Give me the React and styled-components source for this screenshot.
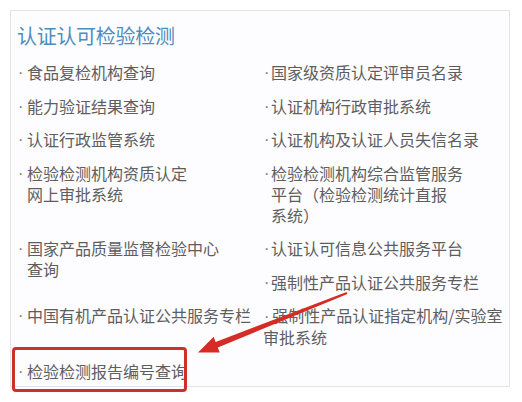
import React from 'react'
import styled, { createGlobalStyle } from 'styled-components';

const Global = createGlobalStyle`
  html, body { margin: 0; padding: 0; background: #fff; }
  body { font-family: "Noto Sans CJK SC", "Noto Sans", sans-serif; }
`;

let Page = styled.div`
  position: relative;
  width: 522px;
  height: 402px;
  overflow: hidden;
  padding: 10px 12px 15px 10px;
  box-sizing: border-box;
`;

let Panel = styled.div`
  box-sizing: border-box;
  height: 377px;
  border: 1px solid #e4e4e8;
  background: #fdfcfe;
  padding: 13px 6px 0 6px;
`;

let Title = styled.h2`
  margin: 0 0 14px;
  font-weight: normal;
  font-size: 20px;
  line-height: 24px;
  color: #4d8cbf;
  letter-spacing: -0.3px;
`;

let Grid = styled.div`
  display: grid;
  grid-template-columns: 246px 1fr;
  row-gap: 12.5px;
`;

let Cell = styled.div`
  display: flex;
  flex-direction: column;
  gap: 12.5px;
`;

let Item = styled.div`
  display: flex;
  font-size: 16px;
  line-height: 21px;
  color: #5e5e5e;
  white-space: nowrap;
`;

let Dot = styled.span`
  width: ${p => p.$w || 10}px;
  flex: none;
  font-family: "Liberation Sans", sans-serif;
  color: #777;
  padding-left: 1px;
  box-sizing: border-box;
`;

let Plain = styled.div`
  font-size: 16px;
  line-height: 21px;
  color: #5e5e5e;
  white-space: nowrap;
  & > span { font-family: "Liberation Sans", sans-serif; color: #777; padding: 0 3px 0 1px; }
`;

let Mark = styled.div`
  position: absolute;
  left: 12px;
  top: 347px;
  width: 175px;
  height: 45px;
  box-sizing: border-box;
  border: 3px solid #cc3029;
  border-radius: 4px;
`;

let Arrow = styled.svg`
  position: absolute;
  left: 0;
  top: 0;
  pointer-events: none;
`;

const Entry = ({ lines, w }) => (
  <Item>
    <Dot $w={w}>·</Dot>
    <span>{lines.map((l, i) => <React.Fragment key={i}>{i > 0 && <br />}{l}</React.Fragment>)}</span>
  </Item>
)

const App = () => {
  return (
    <Page>
      <Global />
      <Panel>
        <Title>认证认可检验检测</Title>
        <Grid>
          <Cell><Entry lines={['食品复检机构查询']} /></Cell>
          <Cell><Entry w={8} lines={['国家级资质认定评审员名录']} /></Cell>
          <Cell><Entry lines={['能力验证结果查询']} /></Cell>
          <Cell><Entry w={8} lines={['认证机构行政审批系统']} /></Cell>
          <Cell><Entry lines={['认证行政监管系统']} /></Cell>
          <Cell><Entry w={8} lines={['认证机构及认证人员失信名录']} /></Cell>
          <Cell><Entry lines={['检验检测机构资质认定', '网上审批系统']} /></Cell>
          <Cell><Entry w={8} lines={['检验检测机构综合监管服务', '平台（检验检测统计直报', '系统）']} /></Cell>
          <Cell><Entry lines={['国家产品质量监督检验中心', '查询']} /></Cell>
          <Cell>
            <Entry w={8} lines={['认证认可信息公共服务平台']} />
            <Entry w={8} lines={['强制性产品认证公共服务专栏']} />
          </Cell>
          <Cell><Entry lines={['中国有机产品认证公共服务专栏']} /></Cell>
          <Cell><Plain><span>·</span>强制性产品认证指定机构/实验室<br />审批系统</Plain></Cell>
          <Cell><Entry lines={['检验检测报告编号查询']} /></Cell>
        </Grid>
      </Panel>
      <Mark />
      <Arrow width="522" height="402" viewBox="0 0 522 402">
        <polygon
          fill="#d52c25"
          points="347.4,293.9 217.8,347.5 219.7,352.6 198,352.5 213.7,336.8 215.6,341.9 346.6,292.1"
        />
      </Arrow>
    </Page>
  )
}

export default App
